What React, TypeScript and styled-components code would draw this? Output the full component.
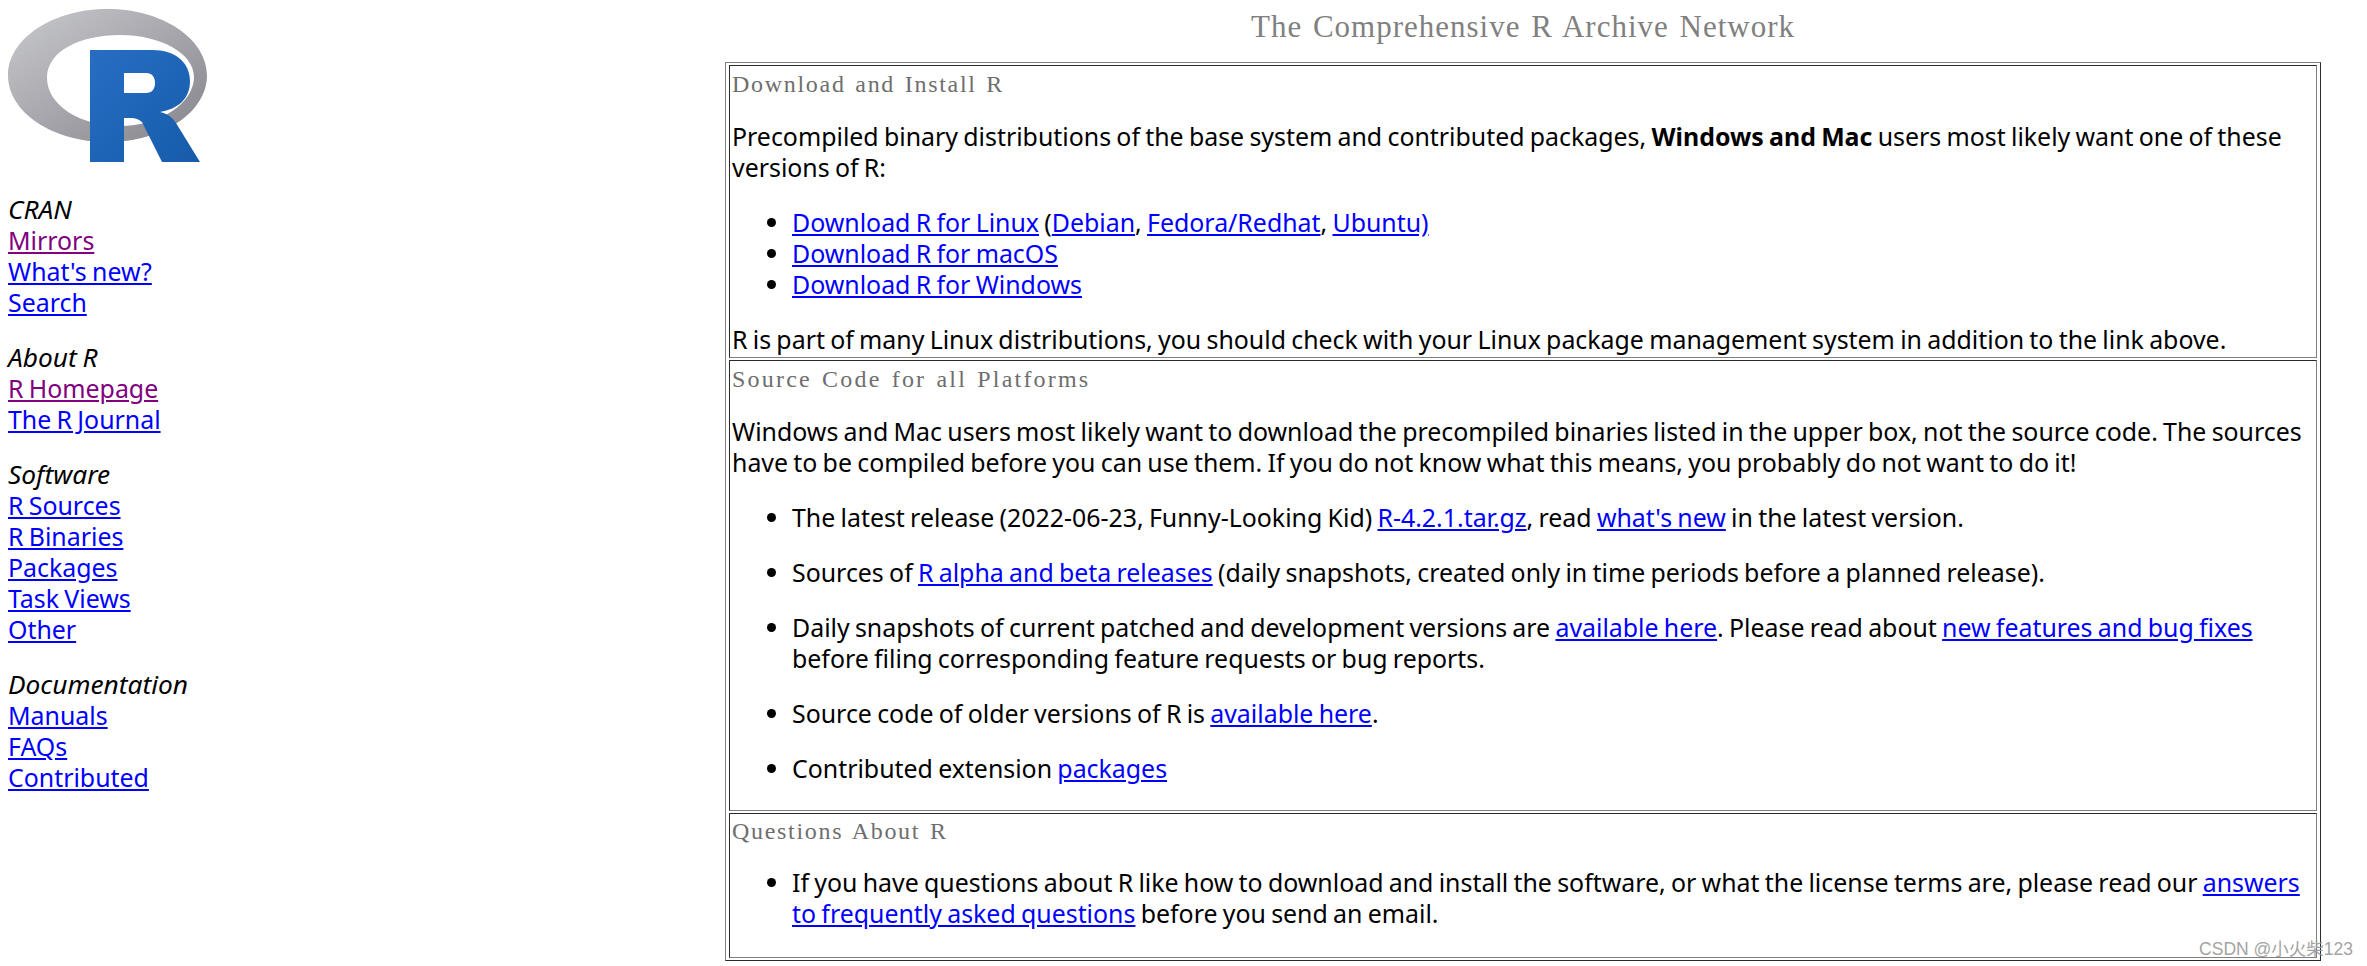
import React from "react";
import styled, { createGlobalStyle } from "styled-components";

const Global = createGlobalStyle`
  html, body { margin: 0; padding: 0; background: #fff; }
  body { font-family: "Noto Sans", "Open Sans", sans-serif; font-size: 24.9px; word-spacing: -1.2px; line-height: 31px; color: #000; }
  a { color: #0000ff; text-decoration: underline; }
`;

const Page = styled.div`
  display: flex;
  width: 2367px;
  height: 966px;
  overflow: hidden;
  position: relative;
`;
const Side = styled.nav`
  width: 725px;
  flex: none;
  padding: 9px 0 0 8px;
  box-sizing: border-box;
`;
const Logo = styled.svg`
  display: block;
  width: 200px;
  height: 155px;
  margin-bottom: 30px;
`;
const NavGroup = styled.div`
  display: flex;
  flex-direction: column;
  align-items: flex-start;
  margin-bottom: 24px;
`;
const NavTitle = styled.em`
  font-style: italic;
  font-size: 26.3px;
`;
const VisitedLink = styled.a<{ $visited?: boolean }>`
  color: ${(p) => (p.$visited ? "#800080" : "#0000ff")};
`;
const Main = styled.main`
  width: 1596px;
  flex: none;
`;
const Title = styled.h1`
  margin: 9px 0 0;
  height: 53px;
  font: 400 31px/36px "Liberation Serif", serif;
  letter-spacing: 1px;
  word-spacing: 2px;
  color: #808080;
  text-align: center;
`;
const Frame = styled.table`
  width: 100%;
  border-collapse: separate;
  border-spacing: 3px 2px;
  border: 1px solid;
  border-color: #808080 #2b2b2b #2b2b2b #808080;
`;
const Cell = styled.td`
  padding: 2px;
  border: 1px solid;
  border-color: #2b2b2b #808080 #808080 #2b2b2b;
  vertical-align: top;
`;
const CellTitle = styled.h2<{ $lift?: boolean; $track?: number }>`
  margin: ${(p) => (p.$lift ? "-1px" : "0")} 0 0;
  padding-top: 1px;
  font: 400 24px/31px "Liberation Serif", serif;
  letter-spacing: ${(p) => p.$track ?? 1.7}px;
  word-spacing: 2px;
  color: #6e6e6e;
`;
const Para = styled.p`
  margin: 21px 0 24px;
  &:last-child { margin-bottom: 0; }
`;
const TightList = styled.ul`
  margin: 24px 0;
  padding-left: 60px;
`;
const LooseList = styled.ul<{ $top?: number }>`
  margin: ${(p) => p.$top ?? 24}px 0 0;
  padding-left: 60px;
`;
const LooseItem = styled.li<{ $end?: boolean }>`
  margin-bottom: ${(p) => (p.$end ? 26 : 24)}px;
`;
const Watermark = styled.div`
  position: absolute;
  right: 14px;
  bottom: 5px;
  font: 400 17.500px/24px "Liberation Sans", "Noto Sans CJK SC", sans-serif;
  word-spacing: 0;
  color: #9a9a9a;
  opacity: 0.9;
`;

const nav = [
  { title: "CRAN", links: [["Mirrors", true], ["What's new?"], ["Search"]] },
  { title: "About R", links: [["R Homepage", true], ["The R Journal"]] },
  { title: "Software", links: [["R Sources"], ["R Binaries"], ["Packages"], ["Task Views"], ["Other"]] },
  { title: "Documentation", links: [["Manuals"], ["FAQs"], ["Contributed"]] },
] as { title: string; links: [string, boolean?][] }[];

function RLogo() {
  return (
    <Logo viewBox="0 0 200 155" aria-label="R logo">
      <defs>
        <linearGradient id="ring" x1="0" y1="0" x2="1" y2="1">
          <stop offset="0" stopColor="#c9cace" />
          <stop offset="1" stopColor="#84838b" />
        </linearGradient>
        <linearGradient id="letter" x1="0" y1="0" x2="1" y2="1">
          <stop offset="0" stopColor="#276dc3" />
          <stop offset="1" stopColor="#165caa" />
        </linearGradient>
      </defs>
      <path
        fillRule="evenodd"
        fill="url(#ring)"
        d="M0 66.500C0 29.800 44.500 0 99.500 0S199 29.800 199 66.500 154.500 133 99.500 133 0 103.200 0 66.500ZM39 69C39 42 72 26 112 26C152 26 186 44 186 68C186 94 152 117 112 117C72 117 39 96 39 69Z"
      />
      <path
        fill="url(#letter)"
        d="M82 41H144C168 41 182 54 182 72C182 90 170 100 152 103C160 105 164 108 168 114L192 153H154L134 113C130 110 128 109 122 109H116V153H82ZM116 64V84H138C144 84 147 80 147 74C147 68 144 64 138 64Z"
      />
    </Logo>
  );
}

export default function App() {
  return (
    <Page>
      <Global />
      <Side>
        <RLogo />
        {nav.map((g) => (
          <NavGroup key={g.title}>
            <NavTitle>{g.title}</NavTitle>
            {g.links.map(([label, visited]) => (
              <VisitedLink key={label} href="#" $visited={visited}>{label}</VisitedLink>
            ))}
          </NavGroup>
        ))}
      </Side>
      <Main>
        <Title>The Comprehensive R Archive Network</Title>
        <Frame>
          <tbody>
            <tr>
              <Cell>
                <CellTitle>Download and Install R</CellTitle>
                <Para>
                  Precompiled binary distributions of the base system and contributed packages, <b>Windows and Mac</b> users most likely want one of these versions of R:
                </Para>
                <TightList>
                  <li><a href="#">Download R for Linux</a> (<a href="#">Debian</a>, <a href="#">Fedora/Redhat</a>, <a href="#">Ubuntu)</a></li>
                  <li><a href="#">Download R for macOS</a></li>
                  <li><a href="#">Download R for Windows</a></li>
                </TightList>
                <Para>R is part of many Linux distributions, you should check with your Linux package management system in addition to the link above.</Para>
              </Cell>
            </tr>
            <tr>
              <Cell>
                <CellTitle $track={2.2}>Source Code for all Platforms</CellTitle>
                <Para>
                  Windows and Mac users most likely want to download the precompiled binaries listed in the upper box, not the source code. The sources have to be compiled before you can use them. If you do not know what this means, you probably do not want to do it!
                </Para>
                <LooseList>
                  <LooseItem>The latest release (2022-06-23, Funny-Looking Kid) <a href="#">R-4.2.1.tar.gz</a>, read <a href="#">what's new</a> in the latest version.</LooseItem>
                  <LooseItem>Sources of <a href="#">R alpha and beta releases</a> (daily snapshots, created only in time periods before a planned release).</LooseItem>
                  <LooseItem>Daily snapshots of current patched and development versions are <a href="#">available here</a>. Please read about <a href="#">new features and bug fixes</a> before filing corresponding feature requests or bug reports.</LooseItem>
                  <LooseItem>Source code of older versions of R is <a href="#">available here</a>.</LooseItem>
                  <LooseItem>Contributed extension <a href="#">packages</a></LooseItem>
                </LooseList>
              </Cell>
            </tr>
            <tr>
              <Cell>
                <CellTitle $lift>Questions About R</CellTitle>
                <LooseList $top={20}>
                  <LooseItem $end>If you have questions about R like how to download and install the software, or what the license terms are, please read our <a href="#">answers to frequently asked questions</a> before you send an email.</LooseItem>
                </LooseList>
              </Cell>
            </tr>
          </tbody>
        </Frame>
      </Main>
      <Watermark>CSDN @小火柴123</Watermark>
    </Page>
  );
}
